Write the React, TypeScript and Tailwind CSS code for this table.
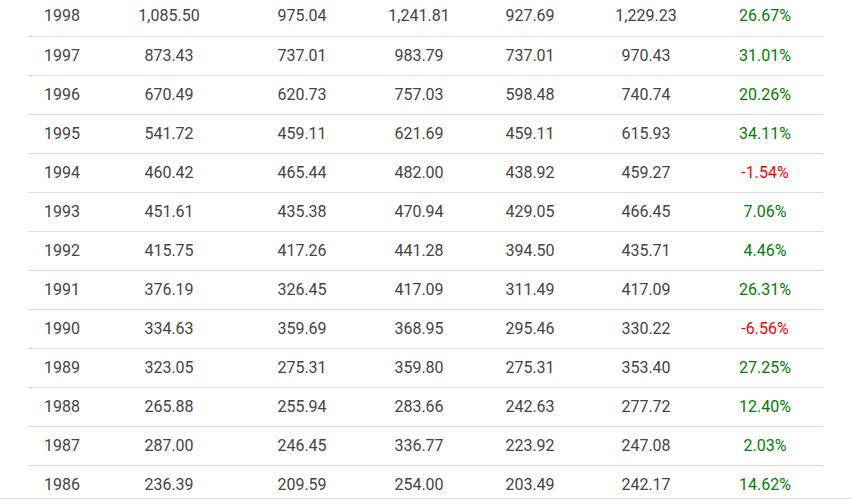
const rows = [
  ["1998", "1,085.50", "975.04", "1,241.81", "927.69", "1,229.23", "26.67%"],
  ["1997", "873.43", "737.01", "983.79", "737.01", "970.43", "31.01%"],
  ["1996", "670.49", "620.73", "757.03", "598.48", "740.74", "20.26%"],
  ["1995", "541.72", "459.11", "621.69", "459.11", "615.93", "34.11%"],
  ["1994", "460.42", "465.44", "482.00", "438.92", "459.27", "-1.54%"],
  ["1993", "451.61", "435.38", "470.94", "429.05", "466.45", "7.06%"],
  ["1992", "415.75", "417.26", "441.28", "394.50", "435.71", "4.46%"],
  ["1991", "376.19", "326.45", "417.09", "311.49", "417.09", "26.31%"],
  ["1990", "334.63", "359.69", "368.95", "295.46", "330.22", "-6.56%"],
  ["1989", "323.05", "275.31", "359.80", "275.31", "353.40", "27.25%"],
  ["1988", "265.88", "255.94", "283.66", "242.63", "277.72", "12.40%"],
  ["1987", "287.00", "246.45", "336.77", "223.92", "247.08", "2.03%"],
  ["1986", "236.39", "209.59", "254.00", "203.49", "242.17", "14.62%"],
];

export default function App() {
  return (
    <div
      className="h-[499px] overflow-hidden border-b border-[#dddddd] bg-white"
      style={{ fontFamily: "Roboto, 'Liberation Sans', sans-serif" }}
    >
      <table className="ml-[28px] mt-[-3px] w-[795px] table-fixed border-collapse text-[16px] text-[#444444]">
        <colgroup>
          <col className="w-[69px]" />
          <col className="w-[144px]" />
          <col className="w-[122px]" />
          <col className="w-[112px]" />
          <col className="w-[110px]" />
          <col className="w-[122px]" />
          <col className="w-[116px]" />
        </colgroup>
        <tbody>
          {rows.map((row) => {
            const change = row[6];
            const negative = change.startsWith("-");
            return (
              <tr key={row[0]} className="h-[39px] border-b border-[#dddddd]">
                <td className="pl-4 text-left">{row[0]}</td>
                {row.slice(1, 6).map((v, i) => (
                  <td key={i} className="text-center">
                    {v}
                  </td>
                ))}
                <td className={negative ? "text-center text-[#ff0000]" : "text-center text-[#008000]"}>
                  {change}
                </td>
              </tr>
            );
          })}
        </tbody>
      </table>
    </div>
  );
}
